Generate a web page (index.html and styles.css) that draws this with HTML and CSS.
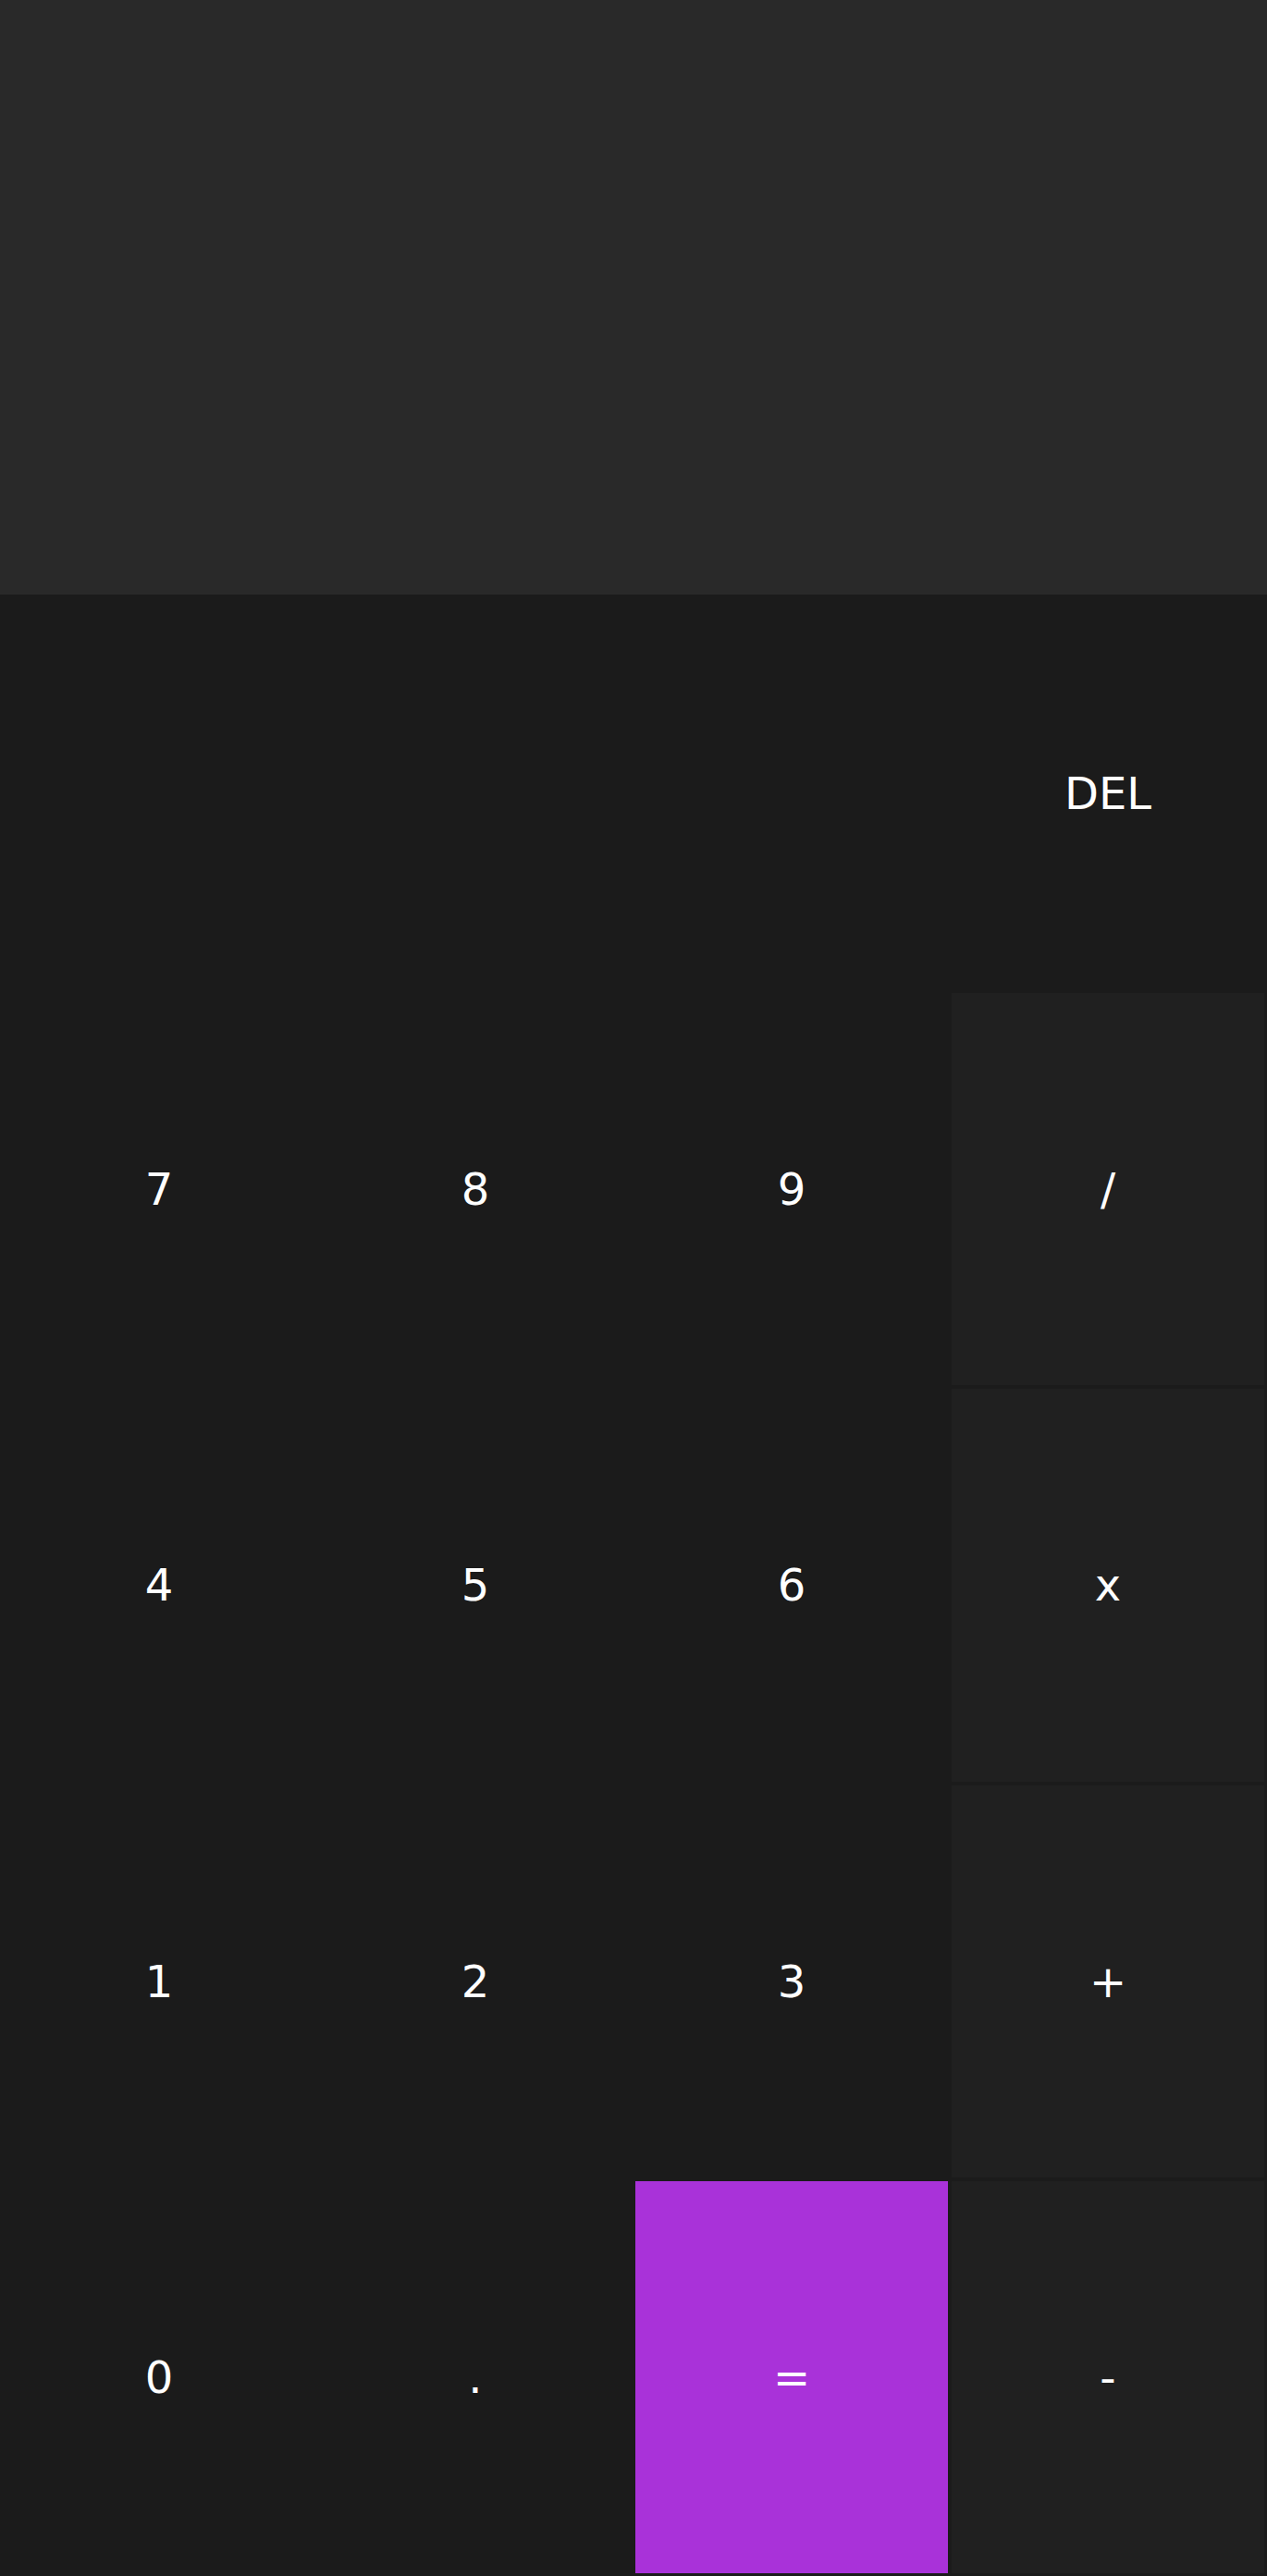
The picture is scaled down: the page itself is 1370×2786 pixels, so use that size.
FILE: index.html
```html
<!DOCTYPE html>
<html>
<head>
<meta charset="utf-8">
<link rel="stylesheet" href="styles.css">
</head>
<body>
<div class="calc">
  <div class="display"></div>
  <div class="keypad">
    <button class="key del">DEL</button>
    <button class="key">7</button>
    <button class="key">8</button>
    <button class="key">9</button>
    <button class="key op">/</button>
    <button class="key">4</button>
    <button class="key">5</button>
    <button class="key">6</button>
    <button class="key op">x</button>
    <button class="key">1</button>
    <button class="key">2</button>
    <button class="key">3</button>
    <button class="key op">+</button>
    <button class="key">0</button>
    <button class="key">.</button>
    <button class="key eq">=</button>
    <button class="key op">-</button>
  </div>
</div>
</body>
</html>
```
FILE: styles.css
```css
html, body {
  margin: 0;
  padding: 0;
  background: #1b1b1b;
}
.calc {
  width: 1370px;
  height: 2786px;
  display: flex;
  flex-direction: column;
}
.display {
  height: 643px;
  background: #292929;
  flex: none;
}
.keypad {
  flex: 1;
  background: #1b1b1b;
  display: grid;
  grid-template-columns: repeat(4, 1fr);
  grid-template-rows: repeat(5, 1fr);
  gap: 4px;
  padding: 3px;
}
.key {
  border: none;
  margin: 0;
  padding: 0;
  background: transparent;
  color: #ffffff;
  font-family: "DejaVu Sans", sans-serif;
  font-size: 48px;
  font-weight: 400;
  display: flex;
  align-items: center;
  justify-content: center;
}
.del {
  grid-column: 4;
}
.op {
  background: #202020;
}
.eq {
  background: #a932d9;
}
```
